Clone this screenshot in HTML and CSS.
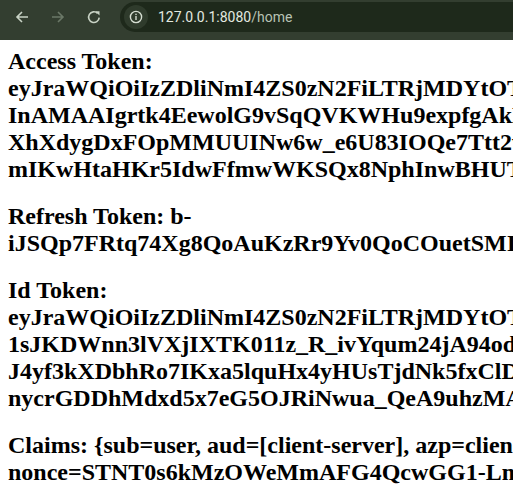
FILE: index.html
```html
<!DOCTYPE html>
<html lang="en">
<head>
<meta charset="utf-8">
<title>home</title>
<link rel="stylesheet" href="styles.css">
</head>
<body>
<header class="chrome">
  <div class="nav">
    <svg class="nav-icon" width="16" height="16" viewBox="0 0 16 16"><path d="M14 8H3M8 3L3 8l5 5" fill="none" stroke="#c9d3c5" stroke-width="1.6"/></svg>
    <svg class="nav-icon" width="16" height="16" viewBox="0 0 16 16"><path d="M2 8h11M8 3l5 5-5 5" fill="none" stroke="#6b7867" stroke-width="1.6"/></svg>
    <svg class="nav-icon" width="16" height="16" viewBox="0 0 16 16"><path d="M13.2 8.6A5.3 5.3 0 1 1 11.6 4.3" fill="none" stroke="#c9d3c5" stroke-width="1.6"/><path d="M9.2 2.2h4.3v4.3z" fill="#c9d3c5"/></svg>
  </div>
  <div class="omnibox">
    <span class="site-info">
      <svg width="14" height="14" viewBox="0 0 14 14"><circle cx="7" cy="7" r="5.6" fill="none" stroke="#d5ddd1" stroke-width="1.4"/><rect x="6.3" y="6" width="1.4" height="4" fill="#d5ddd1"/><rect x="6.3" y="3.7" width="1.4" height="1.4" fill="#d5ddd1"/></svg>
    </span>
    <span class="url">127.0.0.1:8080<span class="path">/home</span></span>
  </div>
</header>
<main class="content">
  <div class="entry">Access Token:<br>eyJraWQiOiIzZDliNmI4ZS0zN2FiLTRjMDYtOTM5Yi1hYmQ4ZjY3OTRiYzAiLCJhbGciOiJSUzI1NiJ9-<br>InAMAAIgrtk4EewolG9vSqQVKWHu9expfgAkLcW2pZr8QnTbd7uVfXy3Hs0Ea1oKiMq-<br>XhXdygDxFOpMMUUINw6w_e6U83IOQe7Ttt2vRkP9sLmGhZaYcN4bWqJfE5xT-<br>mIKwHtaHKr5IdwFfmwWKSQx8NphInwBHUTr3kY7sPzQaLdM2cVoE9gJf-</div>
  <div class="entry">Refresh Token: b-<br>iJSQp7FRtq74Xg8QoAuKzRr9Yv0QoCOuetSMIq2LdWx5nHyTbE8fZk3aP</div>
  <div class="entry">Id Token:<br>eyJraWQiOiIzZDliNmI4ZS0zN2FiLTRjMDYtOTM5Yi1hYmQ4ZjY3OTRiYzAiLCJhbGciOiJSUzI1NiJ9-<br>1sJKDWnn3lVXjIXTK011z_R_ivYqum24jA94odPq8LrTw2sXn5gHfBcE-<br>J4yf3kXDbhRo7IKxa5lquHx4yHUsTjdNk5fxClDm9wQeRz2vPaY6tG-<br>nycrGDDhMdxd5x7eG5OJRiNwua_QeA9uhzMAb3LkWs8pTfXy1oVq</div>
  <div class="entry">Claims: {sub=user, aud=[client-server], azp=client-server, auth_time=2024-<br>nonce=STNT0s6kMzOWeMmAFG4QcwGG1-LmKx9dRp2Yv, iss=http://localhost:9000}</div>
</main>
</body>
</html>
```
FILE: styles.css
```css
html {
  overflow: hidden;
  background: #ffffff;
}
body {
  margin: 0;
  font-family: "Liberation Serif", "Times New Roman", serif;
}
.chrome {
  height: 40px;
  box-sizing: border-box;
  padding-top: 2px;
  background: #333e30;
  display: flex;
  align-items: flex-start;
}
.nav {
  display: flex;
  align-items: center;
  height: 30px;
  gap: 20px;
  padding-left: 14px;
  width: 106px;
}
.nav-icon {
  display: block;
}
.omnibox {
  flex: 1;
  height: 30px;
  border-radius: 15px 0 0 15px;
  background: #1e291b;
  display: flex;
  align-items: center;
  padding-left: 4px;
}
.site-info {
  width: 24px;
  height: 24px;
  border-radius: 50%;
  background: #2f3b2c;
  display: flex;
  align-items: center;
  justify-content: center;
  margin-left: 0;
}
.url {
  margin-left: 10px;
  font-family: "Roboto", "Liberation Sans", sans-serif;
  font-size: 14px;
  color: #e3e9e0;
  white-space: nowrap;
}
.path {
  color: #b8c2b4;
}
.content {
  padding: 8px;
  display: flex;
  flex-direction: column;
  gap: 20px;
}
.entry {
  font-size: 24px;
  font-weight: bold;
  line-height: 27px;
  white-space: nowrap;
  color: #000000;
}
```
